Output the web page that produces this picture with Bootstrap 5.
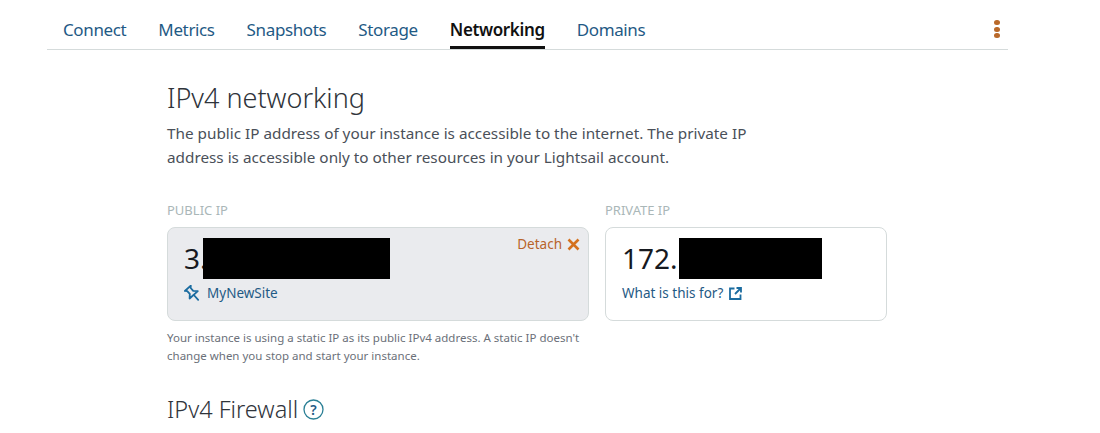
<!DOCTYPE html>
<html lang="en">
<head>
<meta charset="utf-8">
<title>Networking</title>
<link rel="stylesheet" href="https://cdn.jsdelivr.net/npm/bootstrap@5.3.0/dist/css/bootstrap.min.css">
<style>
html,body{height:433px;overflow:hidden;background:#fff}
body{font-family:"Noto Sans","Open Sans",sans-serif;color:#414750}
.tabbar{margin:0 92px 0 47px;height:50px;border-bottom:1px solid #d5dbdb;padding:0 8px 0 16px;gap:32px}
.tablink{display:block;height:49px;padding-top:17px;font-size:17px;line-height:26px;color:#1f5a85;text-decoration:none;letter-spacing:-.37px}
.tablink.current{color:#111;font-weight:600;border-bottom:3px solid #111}
.kebab{margin-left:auto;margin-top:20px;width:6px;gap:1.5px}
.kebab i{display:block;width:5.500px;height:5px;border-radius:50%;background:#b9692a}
.mainpane{margin-left:167px;width:720px}
.paneh{font-size:27px;font-weight:300;line-height:34px;color:#2f343b;margin:31px 0 0}
.panep{font-size:15.3px;line-height:24px;width:620px;margin:6px 0 0;color:#4a5059}
.iplabel{font-size:13px;line-height:16px;color:#aab7b8;margin-bottom:9px}
.ipbox{height:94px;border:1px solid #d5dbdb;border-radius:8px;padding:10px 16px 0;background:#fff;position:relative}
.ipbox.attached{background:#eaebee}
.pubcol{width:422px}
.privcol{width:282px}
.ipval{font-size:28px;line-height:41px;color:#16191f;height:41px}
.hideblock{display:block;background:#000;height:41px}
.hidepub{width:187px;margin-left:-5px}
.hidepriv{width:143px;margin-left:1px}
.iplink{font-size:13.5px;line-height:20px;color:#1f5a85;text-decoration:none;margin-top:4px;gap:6px}
.detach{position:absolute;top:6px;right:8px;font-size:13.5px;line-height:20px;color:#b8642a;gap:5px}
.notep{font-size:11.5px;line-height:18px;color:#6b7079;margin:8px 0 0}
.fwh{font-size:23.500px;font-weight:300;line-height:30px;color:#2f343b;margin:29px 0 0;gap:5px}
</style>
</head>
<body>
<nav class="d-flex tabbar">
  <a class="tablink" href="#">Connect</a>
  <a class="tablink" href="#">Metrics</a>
  <a class="tablink" href="#">Snapshots</a>
  <a class="tablink" href="#">Storage</a>
  <a class="tablink current" href="#">Networking</a>
  <a class="tablink" href="#">Domains</a>
  <div class="kebab d-flex flex-column"><i></i><i></i><i></i></div>
</nav>
<main class="mainpane">
  <h2 class="paneh">IPv4 networking</h2>
  <p class="panep">The public IP address of your instance is accessible to the internet. The private IP address is accessible only to other resources in your Lightsail account.</p>
  <div class="d-flex gap-3" style="margin-top:33px">
    <section class="pubcol">
      <div class="iplabel">PUBLIC IP</div>
      <div class="ipbox attached">
        <div class="ipval d-flex">3.<span class="hideblock hidepub flex-shrink-0"></span></div>
        <a class="iplink d-flex align-items-center" href="#">
          <svg width="17" height="17" viewBox="0 0 17 17" fill="none" stroke="#1b6ca0" stroke-width="1.800" stroke-linejoin="round" stroke-linecap="round"><g transform="rotate(-42 8.500 8.500)"><path d="M4.500 1.500 H12.500 L10.800 3.200 V7 L14 10.300 H3 L6.200 7 V3.200 Z"/><path d="M8.500 10.500 V17"/></g></svg>
          <span>MyNewSite</span>
        </a>
        <div class="detach d-flex align-items-center">Detach
          <svg width="13" height="13" viewBox="0 0 13 13" stroke="#d4711e" stroke-width="2.600"><path d="M1.500 1.500 L11.500 11.500 M11.500 1.500 L1.500 11.500"/></svg>
        </div>
      </div>
      <p class="notep">Your instance is using a static IP as its public IPv4 address. A static IP doesn't change when you stop and start your instance.</p>
    </section>
    <section class="privcol">
      <div class="iplabel">PRIVATE IP</div>
      <div class="ipbox">
        <div class="ipval d-flex">172.<span class="hideblock hidepriv flex-shrink-0"></span></div>
        <a class="iplink d-flex align-items-center" href="#">
          <span>What is this for?</span>
          <svg width="13" height="13" viewBox="0 0 13 13" fill="none" stroke="#1b6ca0" stroke-width="1.800"><path d="M5.500 1.500 H1 V12 H11.500 V7.500"/><path d="M7.500 1 H12 V5.500 M12 1 L6 7"/></svg>
        </a>
      </div>
    </section>
  </div>
  <h3 class="fwh d-flex align-items-center">IPv4 Firewall
    <svg width="21" height="21" viewBox="0 0 21 21"><circle cx="10.500" cy="10.500" r="9.500" fill="none" stroke="#2a7f95" stroke-width="1.300"/><text x="10.500" y="15.500" text-anchor="middle" font-size="14" font-weight="600" font-family="Noto Sans, sans-serif" fill="#1f5a85">?</text></svg>
  </h3>
</main>
</body>
</html>
